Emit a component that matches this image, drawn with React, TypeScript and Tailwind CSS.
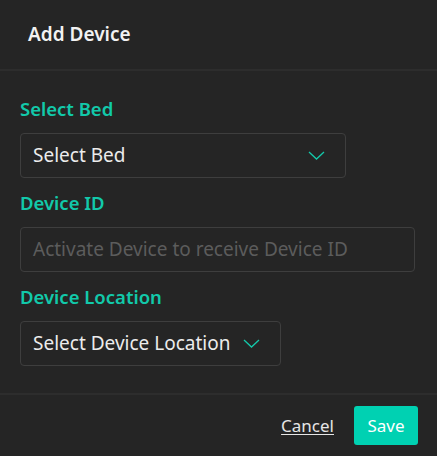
const Chevron = () => (
    <svg width="17" height="9" viewBox="0 0 17 9" fill="none" className="shrink-0">
        <path d="M1 1l7.5 7L16 1" stroke="#14c9aa" strokeWidth="1.3" />
    </svg>
);

export default function App() {
    return (
        <div
            className="flex h-[456px] w-[437px] flex-col bg-[#252525] text-white"
            style={{ fontFamily: '"Noto Sans", "Open Sans", sans-serif' }}
        >
            <div className="flex h-[71px] items-center border-b-2 border-[#2d2d2d] px-7">
                <h2 className="text-[19px] font-semibold text-[#f2f2f2]">Add Device</h2>
            </div>
            <div className="flex flex-1 flex-col px-5 pt-[24px]">
                <label className="text-[18.5px] font-semibold leading-[28px] text-[#12c9aa]">
                    Select Bed
                </label>
                <div className="mt-[10px] flex h-[45px] w-[326px] items-center justify-between rounded-[4px] border border-[#3e3e3e] pl-3 pr-5">
                    <span className="text-[19px] text-[#ececec]">Select Bed</span>
                    <Chevron />
                </div>
                <label className="mt-[11px] text-[18.5px] font-semibold leading-[28px] text-[#12c9aa]">
                    Device ID
                </label>
                <div className="mt-[10px] flex h-[45px] w-[395px] items-center rounded-[4px] border border-[#3e3e3e] px-3">
                    <span className="text-[19px] text-[#5c5c5c]">
                        Activate Device to receive Device ID
                    </span>
                </div>
                <label className="mt-[11px] text-[18.5px] font-semibold leading-[28px] text-[#12c9aa]">
                    Device Location
                </label>
                <div className="mt-[10px] flex h-[45px] w-[261px] items-center justify-between rounded-[4px] border border-[#3e3e3e] pl-3 pr-5">
                    <span className="text-[19px] text-[#ececec]">Select Device Location</span>
                    <Chevron />
                </div>
            </div>
            <div className="flex h-[63px] items-center justify-end gap-5 border-t-2 border-[#2d2d2d] pr-[19px]">
                <button className="text-[17px] text-[#e6e6e6] underline underline-offset-2">
                    Cancel
                </button>
                <button className="h-[39px] w-[64px] rounded-[3px] bg-[#00d1b2] text-[17px] text-white">
                    Save
                </button>
            </div>
        </div>
    );
}
